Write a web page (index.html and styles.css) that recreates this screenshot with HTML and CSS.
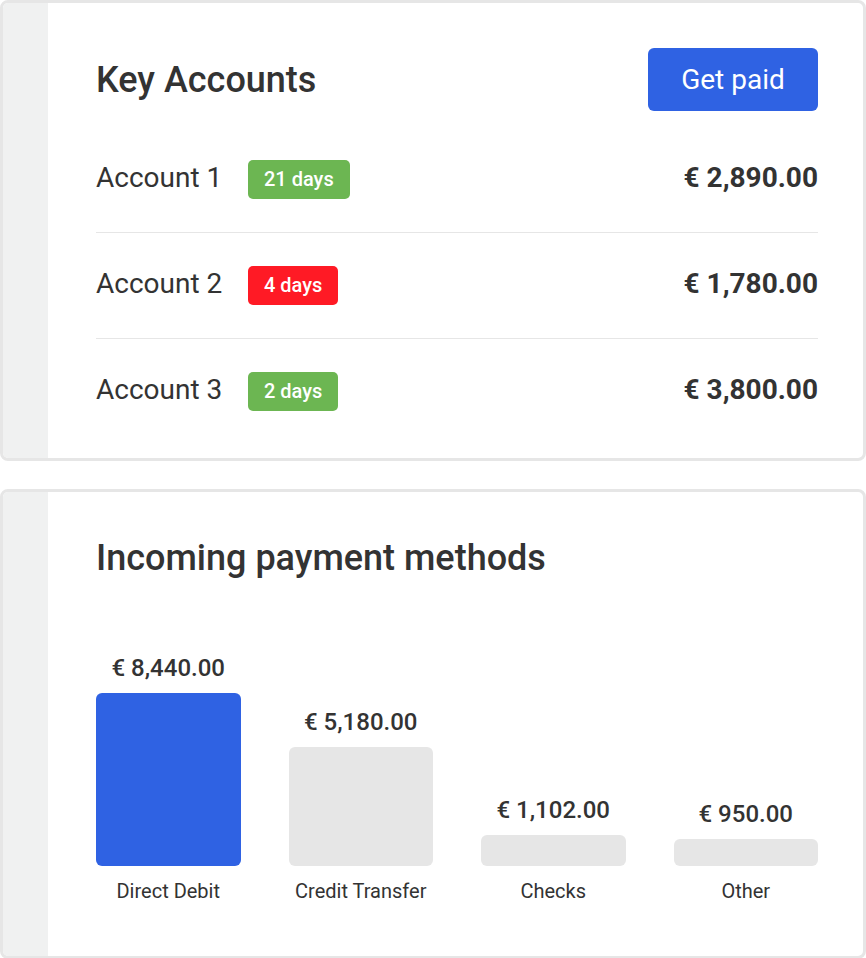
FILE: index.html
```html
<!DOCTYPE html>
<html lang="en">
<head>
    <meta charset="UTF-8">
    <meta name="viewport" content="width=device-width, initial-scale=1.0">
    <title>Dashboard</title>
    <link rel="stylesheet" href="styles.css">
</head>
<body>
    <section class="card">
      <div class="card-side"></div>
      <div class="card-body">
        <div class="card-header">
          <h2 class="card-title">Key Accounts</h2>
          <button class="btn-primary">Get paid</button>
        </div>
        <div class="account-list">
          <div class="account-row">
            <span class="account-name">Account 1</span>
            <span class="badge badge-ok">21 days</span>
            <span class="account-amount">€ 2,890.00</span>
          </div>
          <div class="account-row">
            <span class="account-name">Account 2</span>
            <span class="badge badge-late">4 days</span>
            <span class="account-amount">€ 1,780.00</span>
          </div>
          <div class="account-row">
            <span class="account-name">Account 3</span>
            <span class="badge badge-ok">2 days</span>
            <span class="account-amount">€ 3,800.00</span>
          </div>
        </div>
      </div>
    </section>

    <section class="card card-chart">
      <div class="card-side"></div>
      <div class="card-body">
        <h2 class="card-title">Incoming payment methods</h2>
        <div class="bar-chart">
          <div class="bar-col">
            <span class="bar-value">€ 8,440.00</span>
            <div class="bar bar-active" style="height: 173px"></div>
            <span class="bar-label">Direct Debit</span>
          </div>
          <div class="bar-col">
            <span class="bar-value">€ 5,180.00</span>
            <div class="bar" style="height: 119px"></div>
            <span class="bar-label">Credit Transfer</span>
          </div>
          <div class="bar-col">
            <span class="bar-value">€ 1,102.00</span>
            <div class="bar" style="height: 31px"></div>
            <span class="bar-label">Checks</span>
          </div>
          <div class="bar-col">
            <span class="bar-value">€ 950.00</span>
            <div class="bar" style="height: 27px"></div>
            <span class="bar-label">Other</span>
          </div>
        </div>
      </div>
    </section>
</body>
</html>
```

FILE: styles.css
```css
html, body {
    margin: 0;
    padding: 0;
    background: #fff;
}
body {
    font-family: Roboto, "Liberation Sans", sans-serif;
    color: #333;
}
.card {
  display: flex;
  border: 3px solid #e6e6e6;
  border-radius: 8px;
  overflow: hidden;
  background: #fff;
}
.card-chart {
  margin-top: 28px;
}
.card-side {
  width: 45px;
  flex: none;
  background: #f0f1f1;
}
.card-body {
  flex: 1;
  padding: 45px 45px 0 48px;
}
.card-header {
  display: flex;
  align-items: center;
  justify-content: space-between;
}
.card-title {
  margin: 0;
  font-size: 36px;
  font-weight: 500;
  line-height: 40px;
}
.btn-primary {
  width: 170px;
  height: 63px;
  border: none;
  border-radius: 6px;
  background: #2f62e3;
  color: #fff;
  font-family: inherit;
  font-size: 28px;
  font-weight: 400;
}
.account-list {
  margin-top: 16px;
}
.account-row {
  display: flex;
  align-items: center;
  padding: 33px 0;
  border-top: 1px solid #e6e6e6;
}
.account-row:first-child {
  border-top: none;
}
.account-row:last-child {
  padding-bottom: 47px;
}
.account-name {
  width: 152px;
  font-size: 28px;
  line-height: 35px;
  padding-bottom: 4px;
}
.badge {
  height: 39px;
  line-height: 39px;
  padding: 0 16px;
  border-radius: 5px;
  color: #fff;
  font-size: 20px;
  font-weight: 500;
}
.badge-ok {
  background: #6cb652;
}
.badge-late {
  background: #ff1a25;
}
.account-amount {
  margin-left: auto;
  font-size: 28px;
  font-weight: 700;
  line-height: 35px;
  padding-bottom: 4px;
}
.card-chart .card-body {
  padding-top: 46px;
  padding-bottom: 53px;
}
.bar-chart {
  display: grid;
  grid-template-columns: repeat(4, 1fr);
  column-gap: 48px;
  align-items: end;
  margin-top: 75px;
}
.bar-col {
  display: flex;
  flex-direction: column;
  align-items: stretch;
  text-align: center;
}
.bar-value {
  font-size: 24px;
  font-weight: 500;
  line-height: 30px;
  margin-bottom: 10px;
}
.bar {
  border-radius: 6px;
  background: #e6e6e6;
}
.bar-active {
  background: #2f62e3;
}
.bar-label {
  margin-top: 13px;
  font-size: 20px;
  font-weight: 400;
  line-height: 24px;
}
```
